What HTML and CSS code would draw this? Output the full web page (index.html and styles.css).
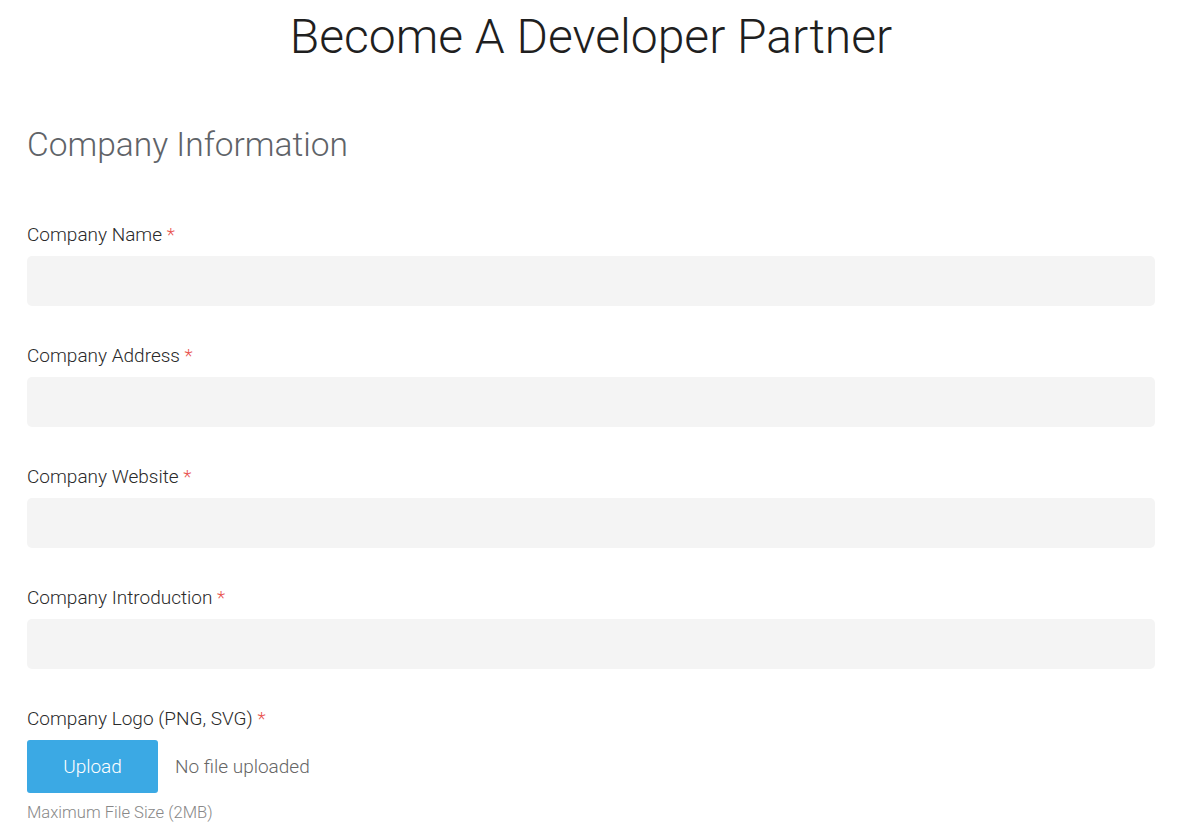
FILE: index.html
```html
<!DOCTYPE html>
<html>
<head>
<meta charset="utf-8">
<link rel="stylesheet" href="styles.css">
</head>
<body>
<div class="page">
  <h1 class="title">Become A Developer Partner</h1>
  <h2 class="section">Company Information</h2>
  <div class="field">
    <label class="label">Company Name <span class="req">*</span></label>
    <div class="input"></div>
  </div>
  <div class="field">
    <label class="label">Company Address <span class="req">*</span></label>
    <div class="input"></div>
  </div>
  <div class="field">
    <label class="label">Company Website <span class="req">*</span></label>
    <div class="input"></div>
  </div>
  <div class="field">
    <label class="label">Company Introduction <span class="req">*</span></label>
    <div class="input"></div>
  </div>
  <div class="field">
    <label class="label">Company Logo (PNG, SVG) <span class="req">*</span></label>
    <div class="upload-row">
      <button class="upload">Upload</button>
      <span class="nofile">No file uploaded</span>
    </div>
    <div class="hint">Maximum File Size (2MB)</div>
  </div>
</div>
</body>
</html>
```
FILE: styles.css
```css
html, body {
  margin: 0;
  padding: 0;
  background: #fff;
}
body {
  font-family: Roboto, "Liberation Sans", sans-serif;
  color: #222;
}
.page {
  width: 1128px;
  margin: 0 0 0 27px;
}
.title {
  margin: 0;
  padding-top: 9px;
  font-weight: 300;
  font-size: 48px;
  line-height: 56px;
  text-align: center;
  color: #1f1f1f;
}
.section {
  margin: 0;
  padding-top: 60px;
  font-weight: 300;
  font-size: 33.5px;
  line-height: 40px;
  color: #5f6368;
}
.field {
  display: flex;
  flex-direction: column;
}
.section + .field {
  margin-top: 57px;
}
.field + .field {
  margin-top: 37px;
}
.label {
  padding-top: 1px;
  font-size: 19px;
  line-height: 24px;
  font-weight: 300;
  color: #2a2a2a;
}
.req {
  color: #e8534f;
}
.input {
  margin-top: 9px;
  height: 50px;
  background: #f4f4f4;
  border-radius: 5px;
}
.upload-row {
  margin-top: 9px;
  display: flex;
  align-items: center;
  gap: 17px;
}
.upload {
  width: 131px;
  height: 53px;
  border: none;
  border-radius: 3px;
  background: #3ba9e4;
  color: #fff;
  font-family: Roboto, "Liberation Sans", sans-serif;
  font-size: 19px;
  font-weight: 300;
  padding: 0;
}
.nofile {
  font-size: 19px;
  font-weight: 300;
  color: #666;
}
.hint {
  margin-top: 10px;
  font-size: 16.6px;
  line-height: 20px;
  font-weight: 300;
  color: #888;
}
```
